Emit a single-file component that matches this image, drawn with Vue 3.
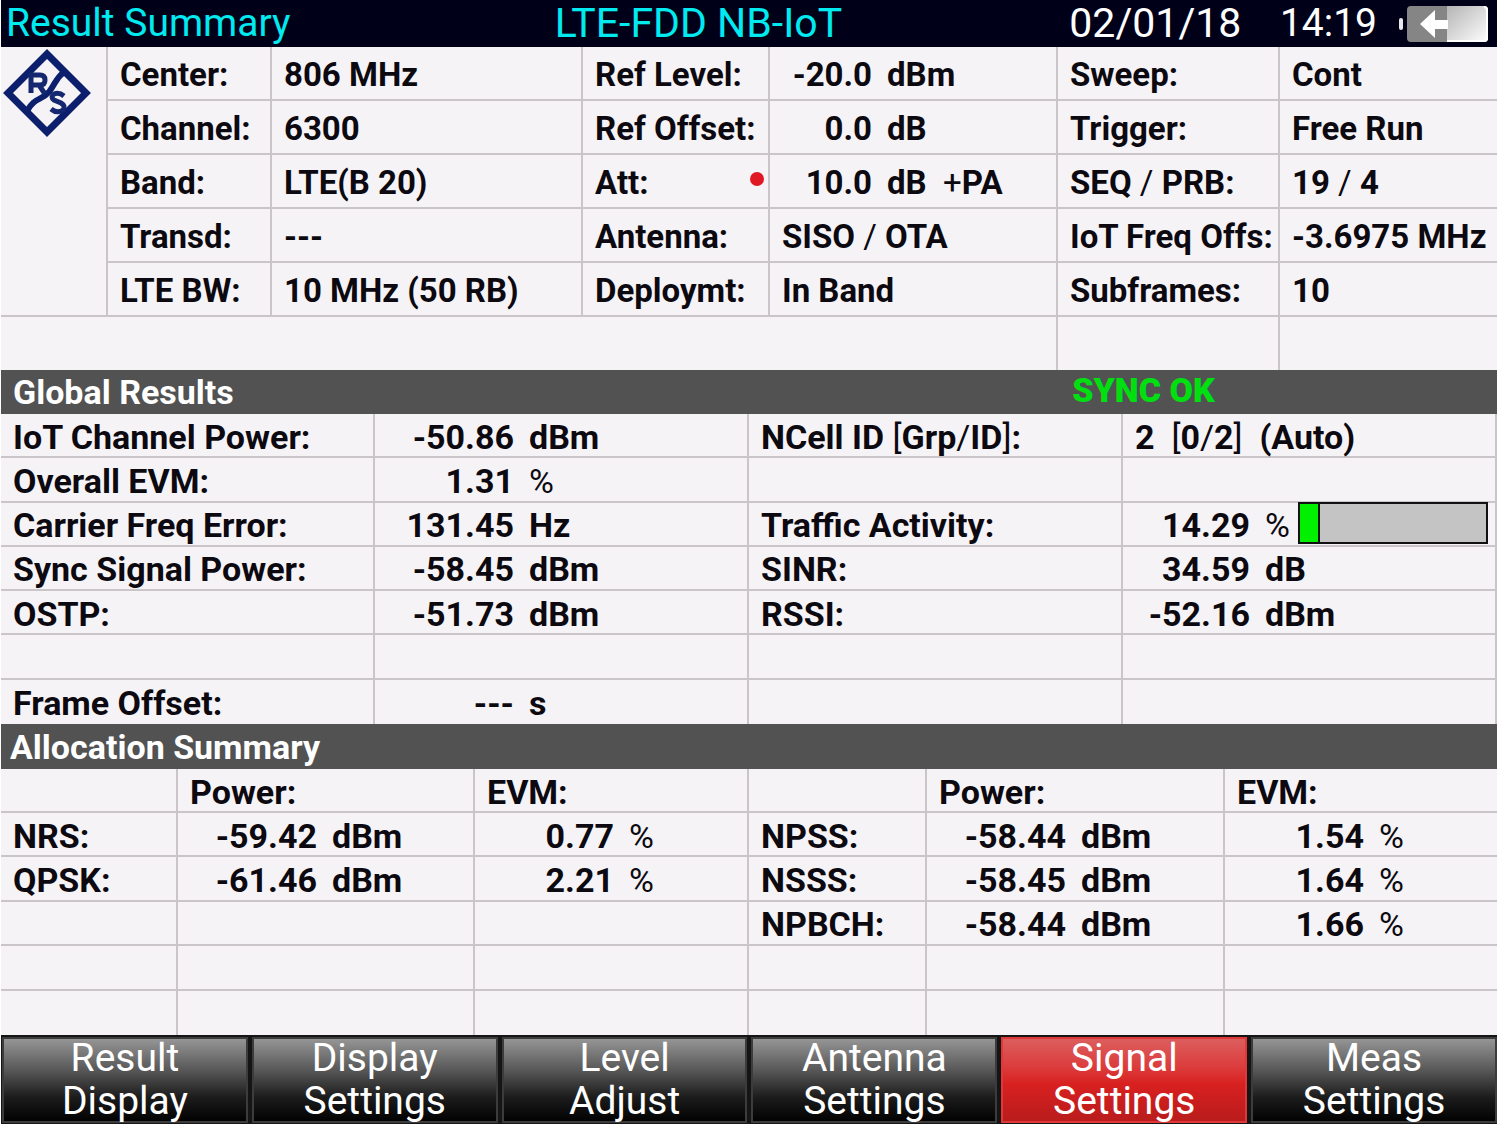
<script setup>
const settingCols = [107, 164, 311, 187, 288, 222, 217]
const settings = [
  [{ t: 'Center:' }, { t: '806 MHz' }, { t: 'Ref Level:' }, { n: '-20.0', u: 'dBm' }, { t: 'Sweep:' }, { t: 'Cont' }],
  [{ t: 'Channel:' }, { t: '6300' }, { t: 'Ref Offset:' }, { n: '0.0', u: 'dB' }, { t: 'Trigger:' }, { t: 'Free Run' }],
  [{ t: 'Band:' }, { t: 'LTE(B 20)' }, { t: 'Att:', dot: true }, { n: '10.0', u: 'dB  +PA' }, { t: 'SEQ / PRB:' }, { t: '19 / 4' }],
  [{ t: 'Transd:' }, { t: '---' }, { t: 'Antenna:' }, { t: 'SISO / OTA' }, { t: 'IoT Freq Offs:' }, { t: '-3.6975 MHz' }],
  [{ t: 'LTE BW:' }, { t: '10 MHz (50 RB)' }, { t: 'Deploymt:' }, { t: 'In Band' }, { t: 'Subframes:' }, { t: '10' }],
]

const globalCols = [374, 374, 374, 374]
const globals = [
  [{ t: 'IoT Channel Power:' }, { n: '-50.86', u: 'dBm' }, { t: 'NCell ID [Grp/ID]:' }, { t: '2  [0/2]  (Auto)' }],
  [{ t: 'Overall EVM:' }, { n: '1.31', u: '%' }, {}, {}],
  [{ t: 'Carrier Freq Error:' }, { n: '131.45', u: 'Hz' }, { t: 'Traffic Activity:' }, { n: '14.29', u: '%', bar: 11 }],
  [{ t: 'Sync Signal Power:' }, { n: '-58.45', u: 'dBm' }, { t: 'SINR:' }, { n: '34.59', u: 'dB' }],
  [{ t: 'OSTP:' }, { n: '-51.73', u: 'dBm' }, { t: 'RSSI:' }, { n: '-52.16', u: 'dBm' }],
  [{}, {}, {}, {}],
  [{ t: 'Frame Offset:' }, { n: '---', u: 's' }, {}, {}],
]

const allocationCols = [177, 297, 274, 178, 298, 272]
const allocations = [
  [{ t: 'NRS:' }, { n: '-59.42', u: 'dBm' }, { n: '0.77', u: '%' }, { t: 'NPSS:' }, { n: '-58.44', u: 'dBm' }, { n: '1.54', u: '%' }],
  [{ t: 'QPSK:' }, { n: '-61.46', u: 'dBm' }, { n: '2.21', u: '%' }, { t: 'NSSS:' }, { n: '-58.45', u: 'dBm' }, { n: '1.64', u: '%' }],
  [{}, {}, {}, { t: 'NPBCH:' }, { n: '-58.44', u: 'dBm' }, { n: '1.66', u: '%' }],
  [{}, {}, {}, {}, {}, {}],
  [{}, {}, {}, {}, {}, {}],
]

const softkeys = [
  ['Result', 'Display'],
  ['Display', 'Settings'],
  ['Level', 'Adjust'],
  ['Antenna', 'Settings'],
  ['Signal', 'Settings'],
  ['Meas', 'Settings'],
]
const activeKey = 4

const share = (cols, w) => ({ width: (w / cols.reduce((a, b) => a + b, 0)) * 100 + '%' })
// Symbols such as / and % are set in the light weight beside bold text.
const pieces = (text) => (text || '').split(/([/%+[\]])/).filter(Boolean)
const isLight = (piece) => /^[/%+[\]]$/.test(piece)
</script>

<template>
  <main class="screen">
    <header class="topbar">
      <h1>Result Summary</h1>
      <span class="mode">LTE-FDD NB-IoT</span>
      <span class="date">02/01/18</span>
      <span class="time">14:19</span>
      <svg class="battery" viewBox="0 0 92 38" role="img" aria-label="Battery charging">
        <defs>
          <linearGradient id="cell" x1="0" y1="0" x2="1" y2="1">
            <stop offset="0" stop-color="#b4b4b4" />
            <stop offset="1" stop-color="#ffffff" />
          </linearGradient>
        </defs>
        <rect x="2" y="13" width="4" height="12" rx="2" fill="#e8e8e8" />
        <rect x="10" y="1" width="81" height="36" rx="4" fill="#858585" />
        <path d="M50 1H87a4 4 0 0 1 4 4V33a4 4 0 0 1-4 4H50Z" fill="url(#cell)" />
        <path d="M87 2a3 3 0 0 1 3 3V33a3 3 0 0 1-3 3H50" fill="none" stroke="#fff" stroke-width="2" />
        <path d="M23 19 38 5V15H51V24H38V33Z" fill="#fff" />
      </svg>
    </header>

    <table class="grid settings">
      <colgroup><col v-for="(w, i) in settingCols" :key="i" :style="share(settingCols, w)" /></colgroup>
      <tbody>
        <tr v-for="(row, r) in settings" :key="r">
          <td v-if="r === 0" rowspan="5" class="brand">
            <svg class="logo" viewBox="0 0 88 88" role="img" aria-label="Rohde and Schwarz">
              <path d="M44 5 83 44 44 83 5 44Z" fill="none" stroke="#0b1f6c" stroke-width="7" />
              <path d="M62 22C52 30 53 34 46 43C38 52 32 48 24 62" fill="none" stroke="#0b1f6c" stroke-width="6" />
              <path d="M28 44V26H37Q42 26 42 31Q42 36 37 36H28M36 36 42 45" fill="none" stroke="#14276f" stroke-width="5" />
              <path d="M61 47Q56 43 51 45Q47 48 51 51L58 54Q63 57 60 61Q54 65 48 60" fill="none" stroke="#14276f" stroke-width="5" />
            </svg>
          </td>
          <td v-for="(c, i) in row" :key="i">
            <div class="cell">
              <span v-if="c.n" class="num">{{ c.n }}</span>
              <span :class="{ unit: c.n }"><span v-for="(p, k) in pieces(c.t || c.u)" :key="k" :class="{ light: isLight(p) }">{{ p }}</span></span>
              <i v-if="c.dot" class="dot"></i>
            </div>
          </td>
        </tr>
        <tr><td colspan="5"></td><td></td><td></td></tr>
      </tbody>
    </table>

    <div class="section">
      <h2>Global Results</h2>
      <strong class="sync">SYNC OK</strong>
    </div>

    <table class="grid globals">
      <colgroup><col v-for="(w, i) in globalCols" :key="i" :style="share(globalCols, w)" /></colgroup>
      <tbody>
        <tr v-for="(row, r) in globals" :key="r">
          <td v-for="(c, i) in row" :key="i">
            <div class="cell">
              <span v-if="c.n" class="num">{{ c.n }}</span>
              <span :class="{ unit: c.n }"><span v-for="(p, k) in pieces(c.t || c.u)" :key="k" :class="{ light: isLight(p) }">{{ p }}</span></span>
              <div v-if="c.bar" class="meter" role="meter" aria-label="Traffic Activity" :aria-valuenow="c.n">
                <div class="fill" :style="{ width: c.bar + '%' }"></div>
              </div>
            </div>
          </td>
        </tr>
      </tbody>
    </table>

    <div class="section alloc"><h2>Allocation Summary</h2></div>

    <table class="grid allocation">
      <colgroup><col v-for="(w, i) in allocationCols" :key="i" :style="share(allocationCols, w)" /></colgroup>
      <thead>
        <tr><td></td><th>Power:</th><th>EVM:</th><td></td><th>Power:</th><th>EVM:</th></tr>
      </thead>
      <tbody>
        <tr v-for="(row, r) in allocations" :key="r">
          <td v-for="(c, i) in row" :key="i">
            <div class="cell">
              <span v-if="c.n" class="num">{{ c.n }}</span>
              <span :class="{ unit: c.n }"><span v-for="(p, k) in pieces(c.t || c.u)" :key="k" :class="{ light: isLight(p) }">{{ p }}</span></span>
            </div>
          </td>
        </tr>
      </tbody>
    </table>

    <nav class="softkeys">
      <button v-for="(k, i) in softkeys" :key="i" type="button" :class="{ active: i === activeKey }">
        <span>{{ k[0] }}</span><span>{{ k[1] }}</span>
      </button>
    </nav>
  </main>
</template>

<style>
body {
  margin: 0;
  background: #fff;
}
</style>

<style scoped>
.screen {
  display: flex;
  flex-direction: column;
  min-height: 100vh;
  box-sizing: border-box;
  padding: 0 2px 0 1px;
  font-family: Roboto, "Liberation Sans", sans-serif;
  font-size: 34px;
  line-height: 38px;
  font-weight: 700;
  color: #0c0a10;
}
.topbar {
  display: grid;
  grid-template-columns: 37% 34.7% 14.2% 1fr auto;
  align-items: center;
  height: 47px;
  box-sizing: border-box;
  padding: 0 8px 0 5px;
  background: #000018;
  color: #00eaf0;
  font-size: 39px;
  line-height: 47px;
  font-weight: 400;
  white-space: nowrap;
}
h1 {
  margin: 0;
  font: inherit;
}
.mode,
.date {
  font-size: 41px;
}
.date,
.time {
  color: #fff;
}
.battery {
  width: 92px;
  height: 38px;
}
.grid {
  width: 100%;
  table-layout: fixed;
  border-spacing: 0;
  background: #f6f3f6;
}
.settings {
  height: 323px;
  font-size: 33px;
}
.settings tr {
  height: 54px;
}
.settings tr:last-child {
  height: 53px;
}
.globals {
  height: 310px;
}
.globals tr,
.allocation tr {
  height: 44px;
}
.allocation {
  height: 266px;
}
td,
th {
  padding: 0 0 0 12px;
  border-right: 2px solid #c9c5c9;
  border-bottom: 2px solid #c9c5c9;
  text-align: left;
  white-space: nowrap;
}
th {
  padding-top: 3px;
}
td:last-child,
th:last-child {
  border-right: 0;
}
.globals td:last-child {
  border-right: 2px solid #c9c5c9;
}
tbody tr:last-child td {
  border-bottom: 0;
}
.grid .brand {
  padding: 2px 0 0 2px;
  border-right: 2px solid #c9c5c9;
  vertical-align: top;
}
.logo {
  display: block;
  width: 88px;
  height: 88px;
}
.cell {
  display: flex;
  align-items: center;
  padding-top: 3px;
  white-space: pre;
}
.num {
  width: 127px;
  text-align: right;
}
.settings .num {
  width: 90px;
}
.globals td:last-child .num {
  width: 115px;
}
.unit {
  margin-left: 15px;
}
.light {
  font-weight: 400;
}
.dot {
  width: 14px;
  height: 14px;
  margin: 0 4px 8px auto;
  border-radius: 50%;
  background: #e01824;
}
.meter {
  flex: 1;
  height: 42px;
  box-sizing: border-box;
  margin: -4px 7px 0 8px;
  border: 2px solid #111;
  background: #c4c4c4;
}
.fill {
  height: 100%;
  box-sizing: border-box;
  border-right: 2px solid #111;
  background: #00f000;
}
.section {
  display: flex;
  align-items: center;
  height: 44px;
  background: #525252;
  color: #fff;
}
.alloc {
  height: 45px;
}
h2 {
  width: 71.6%;
  box-sizing: border-box;
  margin: 0;
  padding-left: 12px;
  font: inherit;
}
.alloc h2 {
  padding-left: 9px;
}
.sync {
  padding-bottom: 4px;
  color: #00e010;
}
.softkeys {
  display: grid;
  grid-template-columns: repeat(6, 1fr);
  gap: 4px;
  flex-grow: 1;
  padding: 2px 0 1px 1px;
  background: #151515;
}
button {
  display: flex;
  flex-direction: column;
  align-items: center;
  padding: 0;
  border: 0;
  box-shadow: inset 0 0 0 2px #3c3c3c;
  background: linear-gradient(#999 0%, #555 40%, #1c1c1c 70%, #000 100%);
  color: #fff;
  font: inherit;
  font-size: 39px;
  line-height: 43px;
  font-weight: 400;
}
button.active {
  box-shadow: inset 0 0 0 2px #e03838;
  background: linear-gradient(#dc6060 0%, #dc3c3c 35%, #d82020 55%, #b81c1c 100%);
}
</style>
